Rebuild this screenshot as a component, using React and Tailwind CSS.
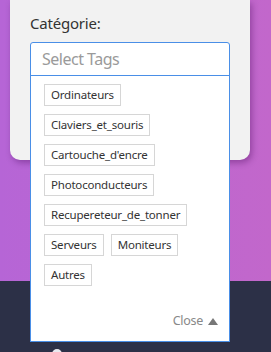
export default function App() {
  const rows = [
    ["Ordinateurs"],
    ["Claviers_et_souris"],
    ["Cartouche_d'encre"],
    ["Photoconducteurs"],
    ["Recupereteur_de_tonner"],
    ["Serveurs", "Moniteurs"],
    ["Autres"],
  ];
  return (
    <div
      className="relative w-[271px] h-[352px] overflow-hidden"
      style={{ fontFamily: '"Noto Sans", "Open Sans", sans-serif' }}
    >
      <div className="h-[281px] bg-gradient-to-r from-[#b665d6] to-[#c267cb]">
        <div className="ml-[10px] w-[240px] h-[160px] bg-[#f2f2f2] rounded-b-[10px] shadow-[2px_3px_6px_rgba(60,0,80,0.35)] pl-[20px] pt-[12px]">
          <div className="text-[15px] leading-[22px] tracking-[-0.2px] text-[#333]">Catégorie:</div>
          <div className="relative mt-[8px] w-[200px]">
            <div className="h-[34px] border border-[#4a8fe7] rounded-t-[3px] bg-white flex items-center pl-[11px] text-[16px] tracking-[-0.5px] text-[#9a9a9a]">
              Select Tags
            </div>
            <div className="absolute left-0 top-[33px] w-[200px] h-[267px] border border-[#4a8fe7] bg-white z-10 flex flex-col">
              <div className="flex flex-col gap-[8px] pl-[13px] pt-[8px]">
                {rows.map((r, i) => (
                  <div key={i} className="flex gap-[7px]">
                    {r.map((t) => (
                      <span
                        key={t}
                        className="h-[22px] px-[6px] border border-[#d6d6d6] text-[11.5px] tracking-[-0.2px] leading-[20px] text-[#333] whitespace-nowrap"
                      >
                        {t}
                      </span>
                    ))}
                  </div>
                ))}
              </div>
              <div className="mt-auto mb-[10px] mr-[11px] flex justify-end items-center gap-[5px] text-[12.5px] tracking-[-0.3px] text-[#888]">
                <span>Close</span>
                <svg width="10" height="7" viewBox="0 0 10 7">
                  <path d="M5 0 L10 7 L0 7 Z" fill="#777" />
                </svg>
              </div>
            </div>
          </div>
        </div>
      </div>
      <div className="h-[71px] bg-[#2c3047] relative">
        <div className="absolute left-[52px] top-[68px] w-[10px] h-[10px] rounded-full bg-[#e8e8ee]" />
      </div>
    </div>
  );
}
